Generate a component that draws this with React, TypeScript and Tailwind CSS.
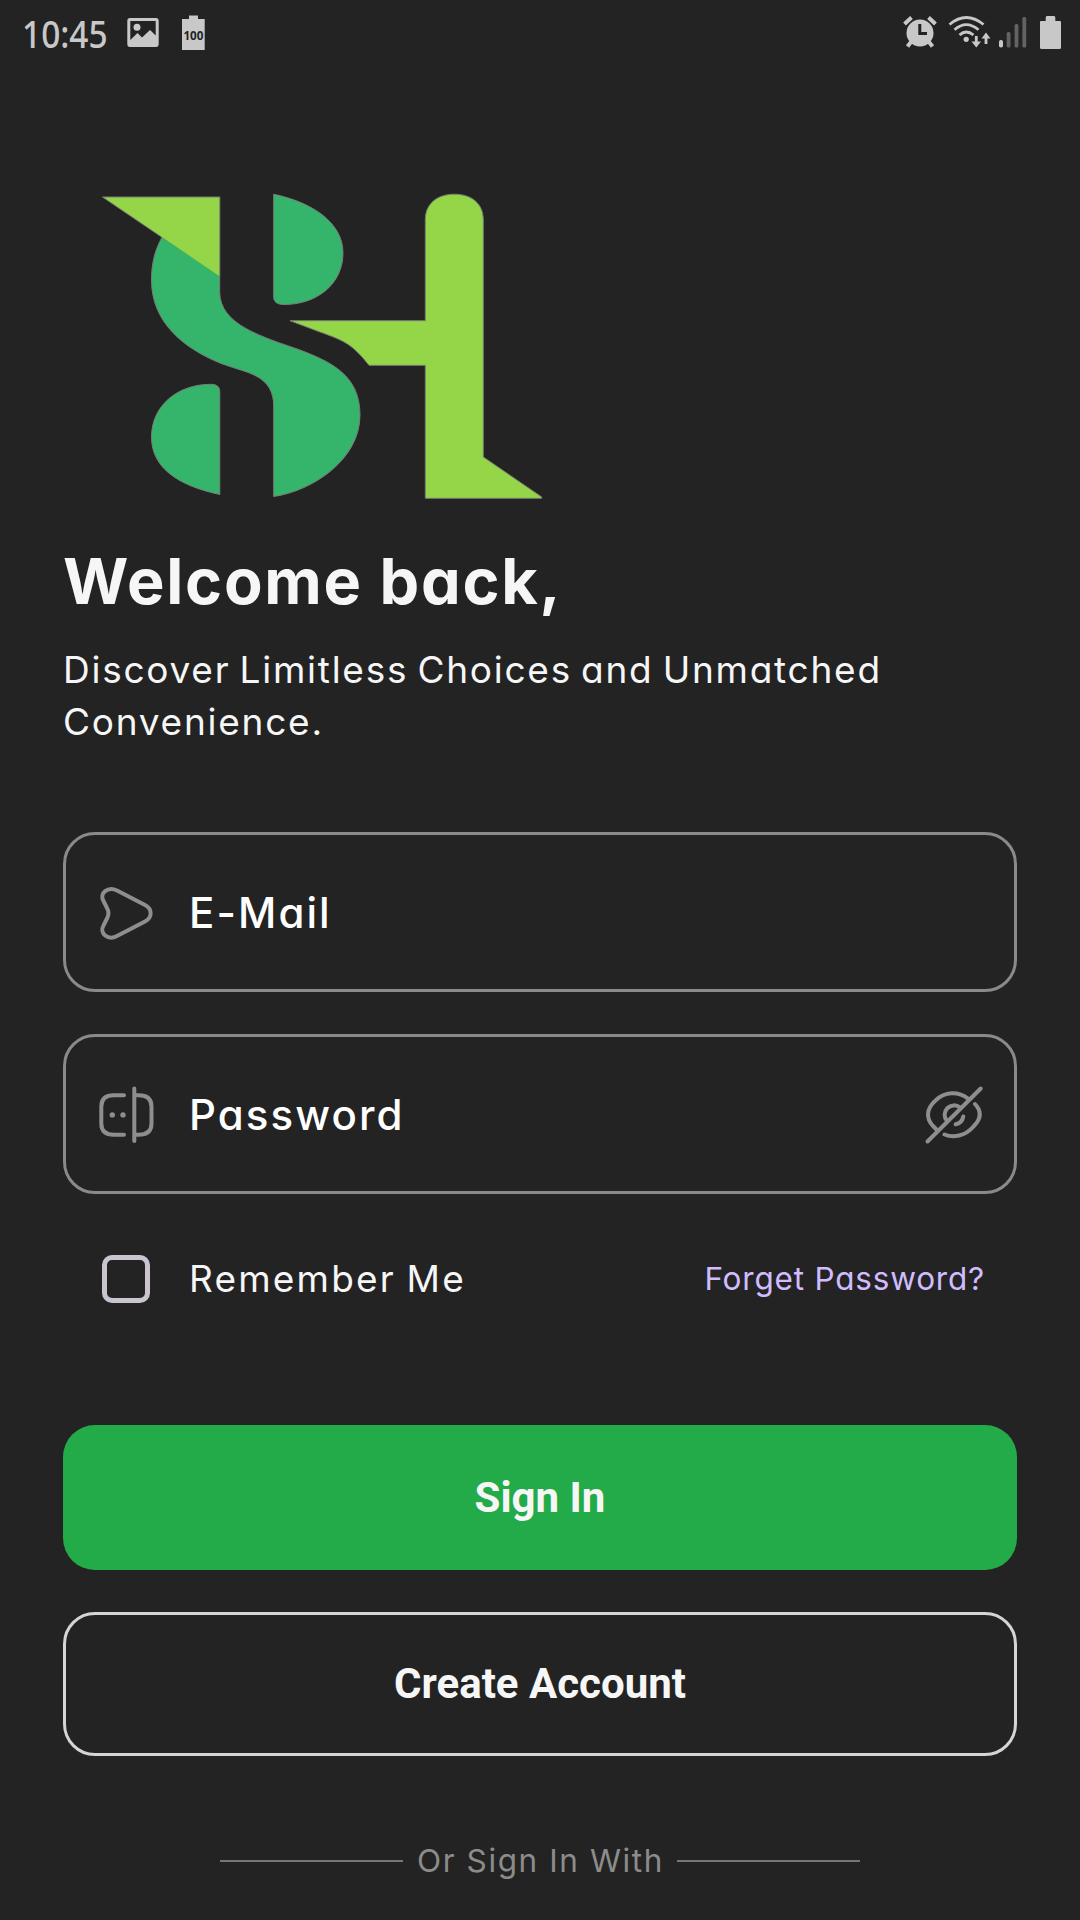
import React from "react";

function StatusBar() {
  return (
    <header className="flex h-16 shrink-0 items-start justify-between text-[#c8c8c8]">
      <div className="flex items-start">
        <span className="ml-[22px] mt-[12px] w-[84px] whitespace-nowrap font-['Noto_Sans'] text-[38px] font-medium leading-[42px]">
          <span className="inline-block origin-left scale-x-[0.88]">10:45</span>
        </span>
        <svg className="ml-[16px] h-16 w-[90px]" viewBox="122 0 90 64" fill="currentColor">
          <path
            fillRule="evenodd"
            d="M130 18H156Q158.700 18 158.700 21V44Q158.700 47 156 47H130Q127.300 47 127.300 44V21Q127.300 18 130 18ZM130.300 21V40L137.500 33L142 37.500L150 30L155.700 35.500V21Z"
          />
          <circle cx="137" cy="27.300" r="3.500" />
          <path d="M189 15.500H198V19H204.700V50H182V19H189Z" />
          <text x="193.400" y="39.600" textAnchor="middle" className="font-['Open_Sans'] text-[13px] font-bold" fill="#232323" textLength="20" lengthAdjust="spacingAndGlyphs">
            100
          </text>
        </svg>
      </div>
      <svg className="h-16 w-[180px]" viewBox="900 0 180 64" fill="currentColor">
        <circle cx="920" cy="33" r="13.500" />
        <path d="M919.800 24V33.500H927" fill="none" stroke="#232323" strokeWidth="3" />
        <path d="M904.500 24L911.500 17.500M935.500 24L928.500 17.500M911 42L907.500 46.500M929 42L932.500 46.500" stroke="currentColor" strokeWidth="4" />
        <g fill="none" stroke="currentColor" strokeWidth="2.800">
          <path d="M949.500 24.500Q966.200 10.500 983.500 24.500" />
          <path d="M954.500 29.800Q966.200 19.500 978.500 29.800" />
          <path d="M959.500 35Q966.200 29 973.500 35" />
          <path d="M976.300 36V43M986 44V36" />
        </g>
        <circle cx="966.200" cy="39.300" r="2.600" />
        <path d="M971.500 41.500H981L976.300 47.500ZM981.500 38.500H990.500L986 32.500Z" />
        <rect x="999" y="40" width="4" height="7.500" rx="1.800" />
        <g fill="#636363">
          <rect x="1006.700" y="32" width="3.800" height="15.500" rx="1.500" />
          <rect x="1014.600" y="24" width="3.800" height="23.500" rx="1.500" />
          <rect x="1022.400" y="17" width="3.800" height="30.500" rx="1.500" />
        </g>
        <path d="M1047 16H1054Q1055.300 16 1055.300 17.500V21H1060Q1061 21 1061 22V47.500Q1061 49 1059.500 49H1041.500Q1040 49 1040 47.500V22Q1040 21 1041 21H1045.700V17.500Q1045.700 16 1047 16Z" />
      </svg>
    </header>
  );
}

function Logo() {
  return (
    <svg className="ml-[90px] mt-[116px] h-[330px] w-[460px] shrink-0" viewBox="90 180 460 330" stroke="#777f77" strokeWidth="1">
      <g fill="#35b56c">
        <path d="M162 237.300C155 250 151.500 263 151.500 280C151.500 324 186 349 220 363C239 370 247 371 257 376.500C268 382.500 273.700 392 273.700 406V496.500C312 491 360 460 360 415C360 375 331 362 300 350C263 337 219.700 325 219.700 292V276" />
        <path d="M273.700 194.300C311 202 343 222 343 253C343 284 317 304.500 284 304.500C277 304.500 273.700 302 273.700 297Z" />
        <path d="M219.800 494.500C180 486 151.500 469 151.500 437C151.500 406 177 384.300 211 384.300C217 384.300 219.800 387 219.800 392Z" />
      </g>
      <g fill="#95d648">
        <path d="M102.500 197H219.800V276.500Z" stroke="none" />
        <path d="M162 237.300L102.500 197H219.800V276" fill="none" />
        <path d="M290 320.700H425.300V220C425.300 203 438 194.200 454.300 194.200C471 194.200 483.300 203 483.300 220V457L541.700 497V498.300H425.300V365.300H369C352 344 345 341 320 332Z" />
      </g>
    </svg>
  );
}

const iconClass = "h-[63px] w-[63px] shrink-0";

function SendIcon() {
  return (
    <svg className={iconClass} viewBox="94 881 63 63" fill="none" stroke="currentColor" strokeWidth="4">
      <path d="M117 890.500L145 905C152.500 909 152.500 917.500 145 921.500L117 936C108 941 99 933 103.500 925.500L107 918.500C109 915 109 911.500 107 908L103.500 901C99 893 108 886 117 890.500Z" />
    </svg>
  );
}

function PasswordIcon() {
  return (
    <svg className={iconClass} viewBox="94 1083.500 63 63" fill="none" stroke="currentColor" strokeWidth="4" strokeLinecap="round">
      <path d="M124 1095.700H114Q101.300 1095.700 101.300 1107V1124Q101.300 1135.300 114 1135.300H124M134.300 1089V1141.500M134.300 1095.700H138.500Q151.500 1095.700 151.500 1107V1124Q151.500 1135.300 138.500 1135.300H134.300" />
      <g fill="currentColor" stroke="none">
        <circle cx="112.300" cy="1115.400" r="2.700" />
        <circle cx="123" cy="1115.400" r="2.700" />
      </g>
    </svg>
  );
}

function EyeOffIcon() {
  return (
    <svg className={iconClass} viewBox="922 1083.500 63 63" fill="none" stroke="currentColor" strokeWidth="4" strokeLinecap="round">
      <path d="M980.700 1089L927.500 1142" />
      <path d="M968.300 1099.300C958 1091.500 945 1092 935.500 1101C926 1109.500 926 1119 933 1126.500L936.500 1130" />
      <path d="M975 1104.500C983 1113 980 1120.500 973.500 1127C965 1137 953 1138.500 944.500 1135" />
      <path d="M960 1108A9.400 9.400 0 0 0 947 1121.500M963.300 1117Q962 1123.500 955.700 1124.800" />
    </svg>
  );
}

function Field({ label, icon, trailing }: { label: string; icon: React.ReactNode; trailing?: React.ReactNode }) {
  return (
    <div className="flex h-[160px] shrink-0 items-center rounded-[32px] border-[3px] border-[#8a8a8a] pl-[28px] pr-[29px] text-[#8e8e8e]">
      {icon}
      <span className="ml-[32px] text-[42px] font-medium tracking-[2.1px] text-white">{label}</span>
      {trailing && <span className="ml-auto">{trailing}</span>}
    </div>
  );
}

export default function App() {
  return (
    <main className="flex h-[1920px] w-[1080px] flex-col overflow-hidden bg-[#232323] font-['Inter',sans-serif] text-[#f6f6f6] [font-feature-settings:'cv11']">
      <StatusBar />
      <Logo />
      <div className="flex flex-col px-[63px]">
        <h1 className="mt-[31px] h-[80px] whitespace-nowrap text-[63px] font-bold leading-[80px] tracking-[1.750px]">Welcome back,</h1>
        <p className="mt-[23px] h-[104px] whitespace-nowrap text-[37px] leading-[52px] tracking-[1.750px] [word-spacing:-3px]">
          Discover Limitless Choices and Unmatched
          <br />
          Convenience.
        </p>
        <div className="mt-[84px] flex flex-col gap-[42px]">
          <Field label="E-Mail" icon={<SendIcon />} />
          <Field label="Password" icon={<PasswordIcon />} trailing={<EyeOffIcon />} />
        </div>
        <div className="mt-[60px] flex h-[50px] items-center pl-[39px] pr-[32px]">
          <span className="h-[48px] w-[48px] rounded-[10px] border-[5px] border-[#cac4d0]" />
          <span className="ml-[39px] whitespace-nowrap text-[37px] tracking-[2.200px] [word-spacing:-2px]">Remember Me</span>
          <a className="ml-auto whitespace-nowrap text-[31.500px] tracking-[0.8px] text-[#d0bcff]">Forget Password?</a>
        </div>
        <button className="mt-[121px] h-[145px] rounded-[32px] bg-[#24ab49] font-['Roboto'] text-[42px] font-bold">Sign In</button>
        <button className="mt-[42px] h-[144px] rounded-[32px] border-[3px] border-[#d5d5d5] pb-[2px] font-['Roboto'] text-[42px] font-bold">Create Account</button>
        <div className="mt-[80px] flex h-[50px] items-center justify-center gap-[14px] text-[#8c8c8c]">
          <span className="h-[2px] w-[183px] bg-[#777777]" />
          <span className="w-[246px] whitespace-nowrap text-center text-[31.500px] tracking-[1.600px]">Or Sign In With</span>
          <span className="h-[2px] w-[183px] bg-[#777777]" />
        </div>
      </div>
    </main>
  );
}
